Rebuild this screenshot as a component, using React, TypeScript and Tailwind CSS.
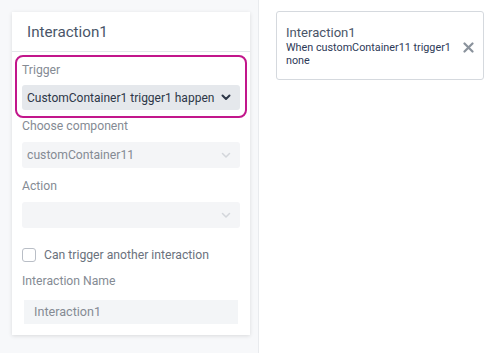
import React from "react";

const Chevron = ({ dark }: { dark?: boolean }) => (
  <svg width="10" height="7" viewBox="0 0 10 7" fill="none">
    <path
      d="M1.5 1.5 L5 5 L8.5 1.5"
      stroke={dark ? "#2d3748" : "#d3d6db"}
      strokeWidth={dark ? 2 : 1.5}
      strokeLinecap="round"
      strokeLinejoin="round"
    />
  </svg>
);

export default function App() {
  return (
    <div className="flex h-[353px] w-[493px] bg-white font-['Roboto',sans-serif]">
      <div className="w-[259px] shrink-0 border-r border-[#e9ebee] bg-[#f7f8fa] pl-[12px] pt-[12px]">
        <div className="w-[238px] bg-white pb-[11px] shadow-[0_1px_4px_rgba(0,0,0,0.12)]">
          <div className="flex h-[40px] items-center border-b border-[#e3e6ea] pl-[15px] pt-[2px] text-[15.2px] text-[#4a5568]">
            Interaction1
          </div>
          <div className="mx-[3px] mt-[3px] h-[63px] rounded-[8px] border-2 border-[#c2168b] px-[5px]">
            <div className="mt-[4px] h-[18px] text-[12.2px] leading-[18px] text-[#858b94]">Trigger</div>
            <div className="mt-[6px] flex h-[25px] items-center justify-between rounded-[3px] bg-[#e5e8ec] pl-[5px] pr-[9px] text-[12px] text-[#2d3748]">
              <span>CustomContainer1 trigger1 happen</span>
              <Chevron dark />
            </div>
          </div>
          <div className="px-[10px]">
            <div className="h-[17px] text-[12.2px] leading-[17px] text-[#858b94]">Choose component</div>
            <div className="mt-[7px] flex h-[26px] items-center justify-between rounded-[3px] bg-[#f4f5f7] pl-[5px] pr-[9px] text-[12.2px] text-[#858b94]">
              <span>customContainer11</span>
              <Chevron />
            </div>
            <div className="mt-[9px] h-[18px] text-[12.2px] leading-[18px] text-[#858b94]">Action</div>
            <div className="mt-[7px] flex h-[26px] items-center justify-end rounded-[3px] bg-[#f4f5f7] pr-[9px]">
              <Chevron />
            </div>
            <div className="mt-[18px] flex h-[18px] items-center">
              <div className="h-[14px] w-[14px] rounded-[3px] border border-[#b9bec6] bg-white" />
              <span className="ml-[8px] text-[12.2px] text-[#6b727d]">Can trigger another interaction</span>
            </div>
            <div className="mt-[8px] h-[18px] text-[12.2px] leading-[18px] text-[#858b94]">Interaction Name</div>
            <div className="mx-[2px] mt-[10px] flex h-[24px] items-center bg-[#f3f5f7] pl-[10px] text-[12.6px] text-[#858b94]">
              Interaction1
            </div>
          </div>
        </div>
      </div>
      <div className="flex-1 bg-white pl-[17px] pt-[11px]">
        <div className="flex h-[69px] w-[208px] rounded-[3px] border border-[#d5d9de] pl-[9px] pt-[12px]">
          <div className="w-[168px]">
            <div className="text-[13.1px] leading-[17px] text-[#4a5568]">Interaction1</div>
            <div className="text-[10.8px] leading-[13px] text-[#2d3a58]">When customContainer11 trigger1 none</div>
          </div>
          <div className="flex flex-1 items-start justify-center pt-[18px]">
            <svg width="11" height="11" viewBox="0 0 11 11">
              <path d="M1.5 1.5 L9.5 9.5 M9.5 1.5 L1.5 9.5" stroke="#8a929c" strokeWidth="2.2" strokeLinecap="round" />
            </svg>
          </div>
        </div>
      </div>
    </div>
  );
}
